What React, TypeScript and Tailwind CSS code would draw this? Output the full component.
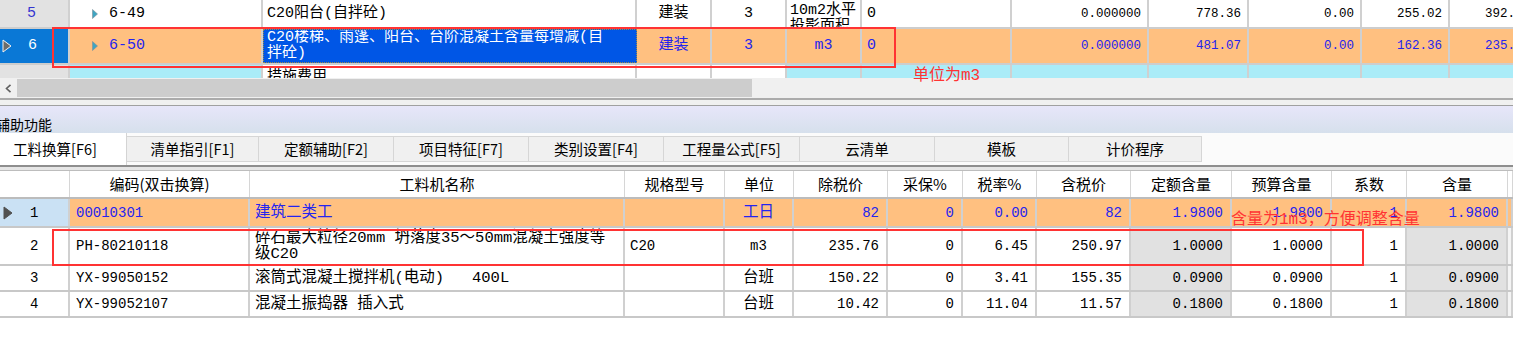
import React from 'react';

const mono = "font-['Liberation_Mono','Noto_Sans_CJK_SC',monospace]";
const sans = "font-['Noto_Sans_CJK_SC',sans-serif]";

const topGrid =
  'grid grid-cols-[70px_193px_374px_75px_75px_75px_150px_137px_100px_113px_88px_88px] w-[1538px]';
const botGrid =
  'grid grid-cols-[70px_180px_375px_100px_69px_94px_75px_74px_94px_101px_100px_75px_101px_1fr]';

function Cell({ className = '', children }: { className?: string; children?: React.ReactNode }) {
  return (
    <div className={`flex items-center overflow-hidden whitespace-nowrap border-r-2 border-[#d0d0d0] ${className}`}>
      {children}
    </div>
  );
}

function Caret() {
  return (
    <svg width="6" height="10" viewBox="0 0 6 10" className="mr-[11px] shrink-0">
      <path d="M0.5 0.5 L5.5 5 L0.5 9.5 Z" fill="#3ea5c2" stroke="#7a8f98" strokeWidth="0.6" />
    </svg>
  );
}

function RowArrow({ hollow }: { hollow?: boolean }) {
  return (
    <svg width="10" height="14" viewBox="0 0 10 14" className="shrink-0">
      <path
        d="M1 1 L9 7 L1 13 Z"
        fill={hollow ? '#6c6c6c' : '#505050'}
        stroke={hollow ? '#f2f2f2' : '#505050'}
        strokeWidth="1"
      />
    </svg>
  );
}

function TopTable() {
  const num = 'justify-end pr-[6px] text-[12.5px]';
  const orange = 'bg-[#ffc080] text-[#2424ee]';
  const cyan = 'bg-[#aaecf8]';
  return (
    <div className="w-[1513px] overflow-hidden text-[15px] leading-[16px]">
      {/* row 5 */}
      <div className={`${topGrid} h-[29px] border-b-2 border-[#cdcdcd]`}>
        <Cell className="bg-[#e2e2e2] pl-[27px] text-[#3434d0]">5</Cell>
        <Cell className="pl-[22px]">
          <Caret />
          6-49
        </Cell>
        <Cell className="pl-[4px]">C20阳台(自拌砼)</Cell>
        <Cell className="justify-center">建装</Cell>
        <Cell className="justify-center">3</Cell>
        <Cell className="items-start pl-[3px] pt-[3px]">
          <div className="flex flex-col">
            <span>10m2水平</span>
            <span>投影面积</span>
          </div>
        </Cell>
        <Cell className="pl-[5px]">0</Cell>
        <Cell className={num}>0.000000</Cell>
        <Cell className={num}>778.36</Cell>
        <Cell className={num}>0.00</Cell>
        <Cell className={num}>255.02</Cell>
        <Cell className={num}>392.81</Cell>
      </div>
      {/* row 6 selected */}
      <div className={`${topGrid} h-[36px] border-b-2 border-[#cdcdcd]`}>
        <Cell className="bg-[#0a78d6] pl-[2px] text-white">
          <RowArrow hollow />
          <span className="ml-[16px]">6</span>
        </Cell>
        <Cell className={`${orange} pl-[22px]`}>
          <Caret />
          6-50
        </Cell>
        <div className="flex flex-col justify-center overflow-hidden border border-dotted border-[#9c8a4a] bg-[#0056e6] pl-[3px] text-white">
          <span>C20楼梯、雨篷、阳台、台阶混凝土含量每增减(自</span>
          <span>拌砼)</span>
        </div>
        <Cell className={`${orange} justify-center`}>建装</Cell>
        <Cell className={`${orange} justify-center`}>3</Cell>
        <Cell className={`${orange} justify-center text-[#4a34c8]`}>m3</Cell>
        <Cell className={`${orange} pl-[5px]`}>0</Cell>
        <Cell className={`${orange} ${num}`}>0.000000</Cell>
        <Cell className={`${orange} ${num}`}>481.07</Cell>
        <Cell className={`${orange} ${num}`}>0.00</Cell>
        <Cell className={`${orange} ${num}`}>162.36</Cell>
        <Cell className={`${orange} ${num}`}>235.81</Cell>
      </div>
      {/* row 7 partial */}
      <div className={`${topGrid} h-[13px]`}>
        <Cell className="bg-[#e2e2e2]" />
        <Cell className={cyan} />
        <Cell className="items-start pl-[4px] pt-[5px]">措施费用</Cell>
        <Cell />
        <Cell />
        <Cell className={cyan} />
        <Cell className={cyan} />
        <Cell className={cyan} />
        <Cell className={cyan} />
        <Cell className={cyan} />
        <Cell className={cyan} />
        <Cell className={cyan} />
      </div>
    </div>
  );
}

function Scrollbar() {
  return (
    <div className="flex h-[20px] items-center bg-[#f0f0f0]">
      <div className="flex w-[17px] justify-center">
        <svg width="7" height="9" viewBox="0 0 7 9">
          <path d="M5.5 0.8 L1.5 4.5 L5.5 8.2" fill="none" stroke="#606060" strokeWidth="1.6" />
        </svg>
      </div>
      <div className="h-[18px] w-[735px] bg-[#cdcdcd]" />
    </div>
  );
}

function Band() {
  return (
    <>
      <div className="h-[2px] bg-[#ababab]" />
      <div className="h-[5px] bg-[#f0f0f0]" />
      <div className="h-px bg-[#a0a0a0]" />
      <div
        className={`flex h-[27px] items-end bg-gradient-to-b from-[#e7e6fa] to-[#d6e0ec] pb-[1px] text-[14px] leading-[16px] ${sans}`}
      >
        <span className="ml-[-4px]">辅助功能</span>
      </div>
    </>
  );
}

const tabs: [string, number][] = [
  ['清单指引[F1]', 132],
  ['定额辅助[F2]', 135],
  ['项目特征[F7]', 135],
  ['类别设置[F4]', 135],
  ['工程量公式[F5]', 136],
  ['云清单', 135],
  ['模板', 134],
  ['计价程序', 133],
];

function Tabs() {
  return (
    <>
      <div className={`flex h-[32px] bg-[#fbfbfb] text-[14.5px] ${sans}`}>
        <div className="flex w-[127px] items-center border-r border-[#d4d4d4] bg-white pl-[13px]">工料换算[F6]</div>
        {tabs.map(([label, w]) => (
          <div
            key={label}
            style={{ width: w }}
            className="mt-[3px] flex h-[26px] items-center justify-center border-y border-r border-[#d6d6d6] bg-[#f0f0f0]"
          >
            {label}
          </div>
        ))}
      </div>
      <div className="h-[2px] bg-[#8e8e8e]" />
      <div className="h-[3px] bg-[#e6e6e6]" />
      <div className="h-px bg-[#bdbdbd]" />
    </>
  );
}

const heads = ['', '编码(双击换算)', '工料机名称', '规格型号', '单位', '除税价', '采保%', '税率%', '含税价', '定额含量', '预算含量', '系数', '含量', ''];

type Row = {
  n: string;
  code: string;
  name: React.ReactNode;
  spec: string;
  unit: string;
  vals: string[];
  h: string;
};

const rows: Row[] = [
  { n: '1', code: '00010301', name: '建筑二类工', spec: '', unit: '工日', vals: ['82', '0', '0.00', '82', '1.9800', '1.9800', '1', '1.9800'], h: 'h-[29px]' },
  {
    n: '2',
    code: 'PH-80210118',
    name: (
      <div className="flex flex-col leading-[16px]">
        <span>碎石最大粒径20mm 坍落度35～50mm混凝土强度等</span>
        <span>级C20</span>
      </div>
    ),
    spec: 'C20',
    unit: 'm3',
    vals: ['235.76', '0', '6.45', '250.97', '1.0000', '1.0000', '1', '1.0000'],
    h: 'h-[38px]',
  },
  { n: '3', code: 'YX-99050152', name: '滚筒式混凝土搅拌机(电动)\u00a0\u00a0 400L', spec: '', unit: '台班', vals: ['150.22', '0', '3.41', '155.35', '0.0900', '0.0900', '1', '0.0900'], h: 'h-[26px]' },
  { n: '4', code: 'YX-99052107', name: '混凝土振捣器 插入式', spec: '', unit: '台班', vals: ['10.42', '0', '11.04', '11.57', '0.1800', '0.1800', '1', '0.1800'], h: 'h-[26px]' },
];

function BottomTable() {
  return (
    <div>
      <div className={`${botGrid} h-[28px] border-b-2 border-[#bcbcbc] text-[15px] ${sans}`}>
        {heads.map((h, i) => (
          <div key={i} className="flex items-center justify-center border-r border-[#d6d6d6]">
            {h}
          </div>
        ))}
      </div>
      {rows.map((r, ri) => {
        const first = ri === 0;
        const bg = first ? 'bg-[#ffc080] text-[#2424f0]' : '';
        const gray = first ? bg : 'bg-[#e1e1e1]';
        return (
          <div key={r.n} className={`${botGrid} ${r.h} border-b-2 border-[#c8c8c8] text-[15.5px] leading-[18px]`}>
            <Cell className={`pl-[3px] text-[14px] ${first ? 'bg-[#cae1f4]' : ''}`}>
              {first ? <RowArrow /> : <span className="w-[10px]" />}
              <span className="ml-[17px]">{r.n}</span>
            </Cell>
            <Cell className={`${bg} pl-[6px] text-[14px]`}>{r.code}</Cell>
            <Cell className={`${bg} pl-[5px]`}>{r.name}</Cell>
            <Cell className={`${bg} pl-[5px] text-[14px]`}>{r.spec}</Cell>
            <Cell className={`${bg} justify-center ${r.unit === 'm3' ? 'text-[14px]' : ''}`}>{r.unit}</Cell>
            {r.vals.map((v, vi) => (
              <Cell
                key={vi}
                className={`${vi === 4 || vi === 7 ? gray : bg} justify-end pr-[7px] text-[14px]`}
              >
                {v}
              </Cell>
            ))}
            <Cell className={first ? bg : 'bg-[#f4f4f4]'} />
          </div>
        );
      })}
    </div>
  );
}

export default function App() {
  return (
    <div className={`relative h-[348px] w-[1513px] overflow-hidden bg-white text-black ${mono}`}>
      <TopTable />
      <Scrollbar />
      <Band />
      <Tabs />
      <BottomTable />
      <div className="absolute left-[52px] top-[27px] h-[41px] w-[844px] border-2 border-[#ff3333]" />
      <div className="absolute left-[913px] top-[67px] text-[16px] leading-[18px] text-[#ff3333]">单位为m3</div>
      <div className="absolute left-[52px] top-[229px] h-[37px] w-[1312px] border-2 border-[#ff3333]" />
      <div className="absolute left-[1231px] top-[211px] text-[16px] leading-[18px] text-[#ff3333]">
        含量为1m3，方便调整含量
      </div>
    </div>
  );
}
